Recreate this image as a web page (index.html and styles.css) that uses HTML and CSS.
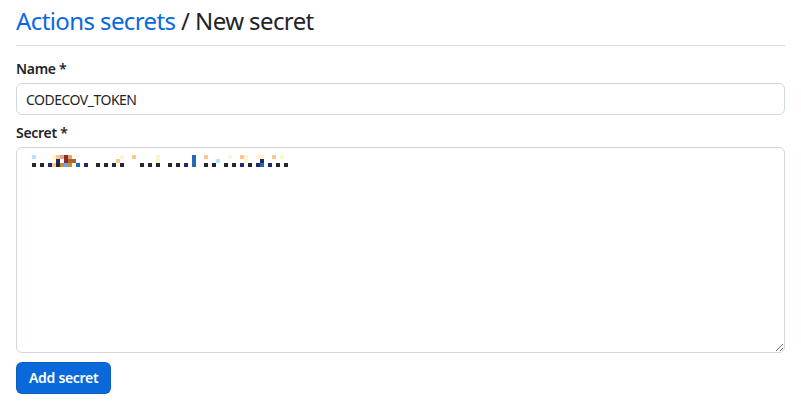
FILE: index.html
```html
<!DOCTYPE html>
<html lang="en">
<head>
<meta charset="utf-8">
<title>New secret</title>
<link rel="stylesheet" href="styles.css">
</head>
<body>
<main class="page">
  <div class="subhead">
    <h2 class="title"><a class="crumb" href="#">Actions secrets</a> / New secret</h2>
  </div>
  <form class="form">
    <div class="group">
      <label class="label" for="name">Name *</label>
      <input class="input" id="name" type="text" value="CODECOV_TOKEN">
    </div>
    <div class="group">
      <label class="label" for="secret">Secret *</label>
      <div class="area-wrap">
        <textarea class="area" id="secret"></textarea>
        <div class="pixels" aria-hidden="true">
          <div class="prow"><i class="c"></i><i></i><i></i><i></i><i></i><i class="y"></i><i class="p"></i><i class="s"></i><i class="r"></i><i class="t"></i><i></i><i></i><i></i><i></i><i></i><i></i><i></i><i></i><i></i><i></i><i></i><i></i><i class="y"></i><i></i><i></i><i class="p"></i><i></i><i></i><i></i><i></i><i></i><i class="y"></i><i></i><i></i><i></i><i></i><i></i><i></i><i></i><i></i><i class="b"></i><i></i><i></i><i class="p"></i><i></i><i></i><i></i><i></i><i></i><i class="y"></i><i></i><i></i><i class="p"></i><i class="y"></i><i></i><i></i><i class="y"></i><i class="y"></i><i></i><i></i><i class="p"></i><i></i><i class="y"></i></div>
          <div class="prow"><i></i><i></i><i></i><i></i><i></i><i></i><i class="n"></i><i></i><i class="r"></i><i class="w"></i><i class="w"></i><i></i><i></i><i></i><i></i><i></i><i></i><i></i><i></i><i></i><i></i><i class="p"></i><i></i><i></i><i></i><i></i><i></i><i></i><i></i><i></i><i></i><i class="y"></i><i></i><i></i><i></i><i></i><i></i><i></i><i></i><i></i><i class="b"></i><i></i><i></i><i></i><i></i><i></i><i class="c"></i><i></i><i></i><i></i><i></i><i></i><i></i><i class="y"></i><i></i><i></i><i></i><i class="n"></i></div>
          <div class="prow"><i class="k"></i><i></i><i class="k"></i><i></i><i class="n"></i><i class="p"></i><i class="k"></i><i class="o"></i><i class="l"></i><i class="o"></i><i></i><i class="b"></i><i></i><i class="n"></i><i></i><i></i><i class="k"></i><i></i><i class="k"></i><i></i><i class="k"></i><i></i><i class="k"></i><i></i><i></i><i></i><i></i><i class="k"></i><i></i><i class="k"></i><i></i><i class="k"></i><i></i><i></i><i class="k"></i><i></i><i class="k"></i><i></i><i class="n"></i><i></i><i class="b"></i><i></i><i></i><i class="k"></i><i></i><i class="k"></i><i></i><i></i><i class="k"></i><i></i><i class="k"></i><i></i><i class="n"></i><i></i><i class="k"></i><i></i><i class="n"></i><i class="b"></i><i></i><i class="n"></i><i></i><i class="k"></i><i></i><i class="k"></i></div>
        </div>
      </div>
    </div>
    <button class="btn" type="button">Add secret</button>
  </form>
</main>
</body>
</html>
```

FILE: styles.css
```css
body {
  margin: 0;
  font-family: "Noto Sans", "Liberation Sans", sans-serif;
  color: #1f2328;
  background: #ffffff;
}

.page {
  padding: 0 16px;
}

.subhead {
  padding-top: 3px;
  padding-bottom: 6px;
  border-bottom: 1px solid #d8dee4;
}

.title {
  margin: 0;
  font-size: 24px;
  font-weight: 400;
  line-height: 36px;
  letter-spacing: -0.6px;
}

.crumb {
  color: #0969da;
  text-decoration: none;
}

.form {
  margin-top: 13px;
}

.group + .group {
  margin-top: 8px;
}

.label {
  display: block;
  font-size: 14px;
  font-weight: 600;
  line-height: 20px;
  letter-spacing: -0.3px;
  margin-bottom: 4px;
}

.input {
  display: block;
  box-sizing: border-box;
  width: 100%;
  height: 32px;
  margin: 0;
  padding: 0 9px;
  border: 1px solid #d0d7de;
  border-radius: 6px;
  font-family: inherit;
  font-size: 14px;
  letter-spacing: -0.5px;
  color: #1f2328;
  background: #ffffff;
}

.area-wrap {
  position: relative;
}

.area {
  display: block;
  box-sizing: border-box;
  width: 100%;
  height: 206px;
  margin: 0;
  padding: 8px;
  border: 1px solid #d0d7de;
  border-radius: 6px;
  font-family: inherit;
  font-size: 14px;
  background: #ffffff;
}

.pixels {
  position: absolute;
  top: 8px;
  left: 16px;
  pointer-events: none;
}

.prow {
  display: flex;
  height: 4px;
}

.prow i {
  flex: none;
  width: 4px;
  height: 4px;
}

.prow .k { background: #24292f; }
.prow .n { background: #24296b; }
.prow .p { background: #fdc68f; }
.prow .o { background: #d28a2e; }
.prow .b { background: #2568b8; }
.prow .l { background: #5aaef0; }
.prow .r { background: #8a2a2a; }
.prow .s { background: #e8a48c; }
.prow .t { background: #e0a868; }
.prow .w { background: #a8642a; }
.prow .y { background: #fff5cc; }
.prow .c { background: #aee6ff; }

.btn {
  display: block;
  margin-top: 9px;
  height: 32px;
  padding: 0 12px;
  border: 1px solid rgba(31, 35, 40, 0.15);
  border-radius: 6px;
  background: #0969da;
  color: #ffffff;
  font-family: inherit;
  font-size: 14px;
  font-weight: 600;
  line-height: 20px;
  letter-spacing: -0.3px;
}
```
